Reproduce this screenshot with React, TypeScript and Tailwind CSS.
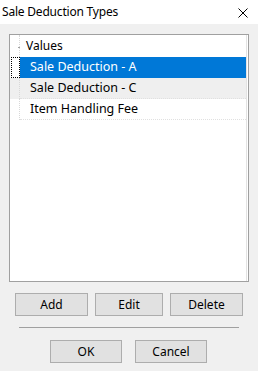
import React from "react";

const rows = ["Sale Deduction - A", "Sale Deduction - C", "Item Handling Fee"];

function Btn({ label, w }: { label: string; w: string }) {
  return (
    <div
      className={`${w} h-[23px] bg-[#e1e1e1] border border-[#adadad] flex items-center justify-center text-[12px] text-black`}
    >
      {label}
    </div>
  );
}

export default function App() {
  return (
    <div
      className="w-[258px] h-[371px] bg-[#f0f0f0] flex flex-col overflow-hidden"
      style={{ fontFamily: '"Noto Sans", "Open Sans", sans-serif' }}
    >
      <div className="h-[24px] bg-white flex items-center justify-between pl-[2px] pr-[10px] shrink-0">
        <span className="text-[12px] text-black leading-none tracking-[-0.2px]">Sale Deduction Types</span>
        <svg width="10" height="10" viewBox="0 0 10 10" className="mt-[1px]">
          <path d="M0.5 0.5 L9.5 9.5 M9.5 0.5 L0.5 9.5" stroke="#000" strokeWidth="1" />
        </svg>
      </div>

      <div className="mx-[9px] mt-[10px] h-[248px] border border-[#a0a0a0] bg-white flex shrink-0">
        <div className="flex-1 flex flex-col">
          {/* header */}
          <div className="flex h-[22px]">
            <div className="w-[10px] border-r border-dotted border-[#d8d8d8] relative">
              <div className="absolute left-[8px] top-[12px] w-[2px] h-[1px] bg-[#a0a0a0]" />
            </div>
            <div className="flex-1 flex items-center pl-[6px] text-[12px] text-black">Values</div>
          </div>
          {rows.map((r, i) => {
            const sel = i === 0;
            const alt = i === 1;
            return (
              <div key={r} className={`flex h-[21px] ${alt ? "bg-[#efefef]" : ""}`}>
                <div className="w-[10px] border-r border-dotted border-[#d8d8d8] relative">
                  {sel && (
                    <div className="absolute left-[1px] top-0 w-[9px] h-[21px] border border-dotted border-black" />
                  )}
                </div>
                <div
                  className={`flex-1 flex items-center pl-[10px] text-[12.5px] ${
                    sel ? "bg-[#0078d7] text-white" : "text-black border-b border-dotted border-[#e0e0e0]"
                  }`}
                >
                  {r}
                </div>
              </div>
            );
          })}
        </div>
        <div className="w-[1px] bg-[#e3e3e3]" />
        <div className="w-[1px]" />
      </div>

      <div className="flex mt-[11px] shrink-0">
        <div className="ml-[15px]">
          <Btn label="Add" w="w-[73px]" />
        </div>
        <div className="ml-[7px]">
          <Btn label="Edit" w="w-[68px]" />
        </div>
        <div className="ml-[7px]">
          <Btn label="Delete" w="w-[73px]" />
        </div>
      </div>

      <div className="mx-[19px] w-[220px] h-[1px] bg-[#a0a0a0] mt-[11px] shrink-0" />

      <div className="flex mt-[12px] shrink-0">
        <div className="ml-[50px]">
          <Btn label="OK" w="w-[72px]" />
        </div>
        <div className="ml-[13px]">
          <Btn label="Cancel" w="w-[72px]" />
        </div>
      </div>
    </div>
  );
}
